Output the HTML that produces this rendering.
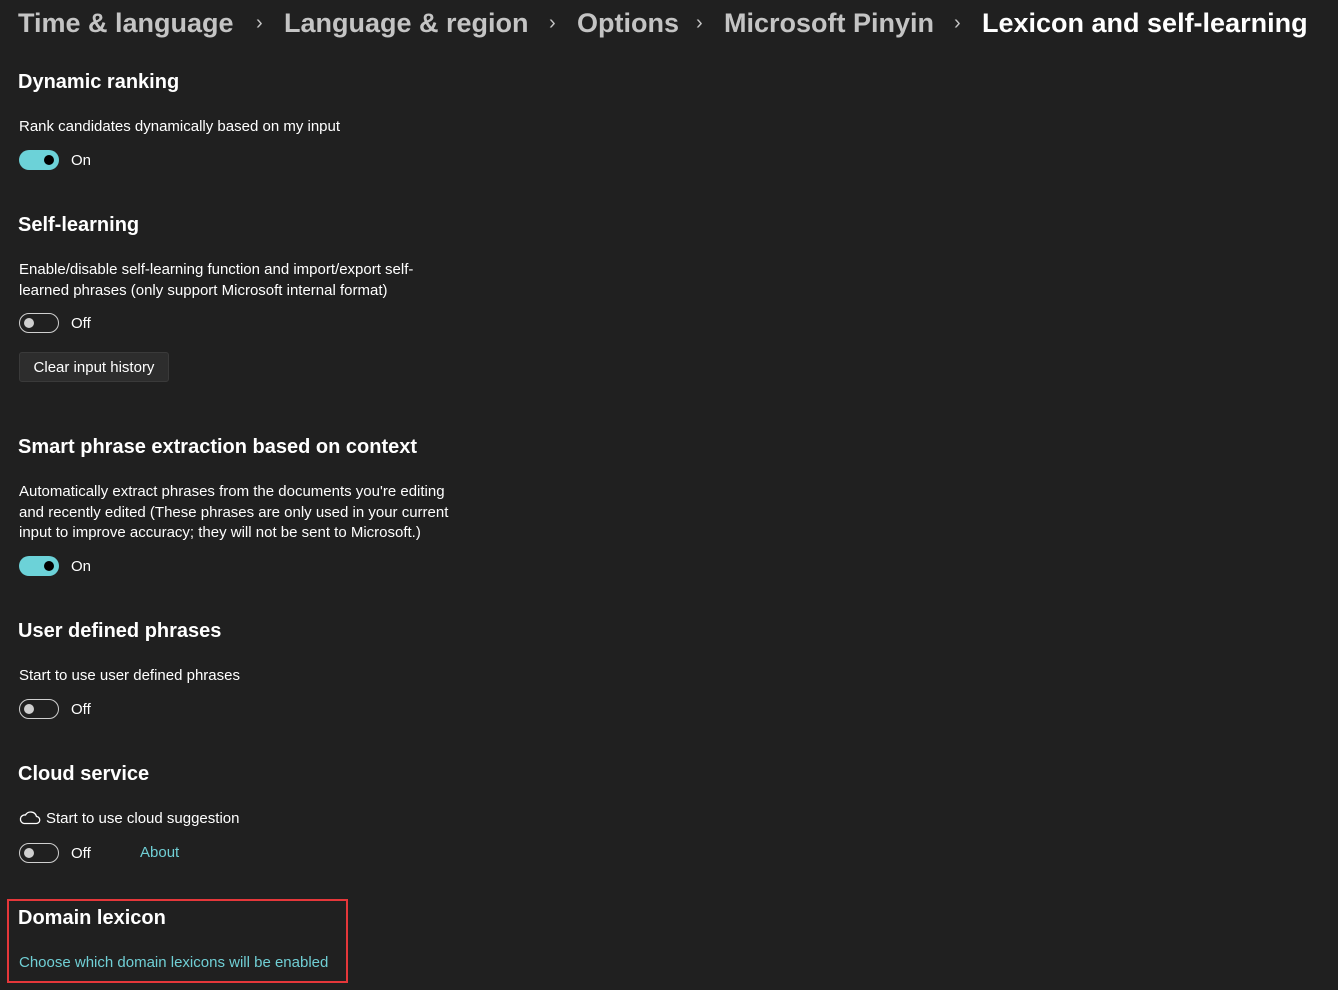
<!DOCTYPE html>
<html><head><style>
body{margin:0;width:1338px;height:990px;background:#202020;font-family:"Liberation Sans",sans-serif;color:#fff;position:relative;overflow:hidden}
.a{position:absolute;white-space:nowrap}
.bc{font-size:27px;font-weight:bold;color:#c4c4c4;top:8px}
.ch{font-size:20px;color:#c4c4c4;top:12px}
.h{font-size:20px;font-weight:bold;left:18px}
.t{font-size:15px;left:19px;line-height:20.5px}
.tg{position:absolute;left:19px;width:40px;height:20px;box-sizing:border-box;border-radius:10px}
.on{background:#6cd2d8}
.on::after{content:"";position:absolute;right:5px;top:5px;width:10px;height:10px;border-radius:50%;background:#000}
.off{border:1px solid #cfcfcf}
.off::after{content:"";position:absolute;left:4px;top:4px;width:10px;height:10px;border-radius:50%;background:#cfcfcf}
.lb{font-size:15px;left:71px}
.ln{color:#70cfd5}
</style></head><body>
<div class="a bc" style="left:18px">Time &amp; language</div>
<div class="a ch" style="left:256px">›</div>
<div class="a bc" style="left:284px">Language &amp; region</div>
<div class="a ch" style="left:549px">›</div>
<div class="a bc" style="left:577px">Options</div>
<div class="a ch" style="left:696px">›</div>
<div class="a bc" style="left:724px">Microsoft Pinyin</div>
<div class="a ch" style="left:954px">›</div>
<div class="a bc" style="left:982px;color:#fff">Lexicon and self-learning</div>

<div class="a h" style="top:71px">Dynamic ranking</div>
<div class="a t" style="top:117px">Rank candidates dynamically based on my input</div>
<div class="tg on" style="top:150px"></div><div class="a lb" style="top:152px">On</div>

<div class="a h" style="top:214px">Self-learning</div>
<div class="a t" style="top:260px">Enable/disable self-learning function and import/export self-<br>learned phrases (only support Microsoft internal format)</div>
<div class="tg off" style="top:313px"></div><div class="a lb" style="top:315px">Off</div>
<div class="a" style="left:19px;top:352px;width:150px;height:30px;box-sizing:border-box;background:#2d2d2d;border:1px solid #3a3a3a;border-radius:3px;font-size:15px;line-height:30px;text-align:center">Clear input history</div>

<div class="a h" style="top:436px">Smart phrase extraction based on context</div>
<div class="a t" style="top:482px">Automatically extract phrases from the documents you're editing<br>and recently edited (These phrases are only used in your current<br>input to improve accuracy; they will not be sent to Microsoft.)</div>
<div class="tg on" style="top:556px"></div><div class="a lb" style="top:558px">On</div>

<div class="a h" style="top:620px">User defined phrases</div>
<div class="a t" style="top:666px">Start to use user defined phrases</div>
<div class="tg off" style="top:699px"></div><div class="a lb" style="top:701px">Off</div>

<div class="a h" style="top:763px">Cloud service</div>
<svg class="a" style="left:19px;top:809px" width="22" height="16" viewBox="0 0 22 16"><path d="M5 14.5h12a3.5 3.5 0 0 0 .5-7A6 6 0 0 0 6.5 6 4.2 4.2 0 0 0 5 14.5z" fill="none" stroke="#fff" stroke-width="1.3"/></svg>
<div class="a t" style="left:46px;top:809px">Start to use cloud suggestion</div>
<div class="tg off" style="top:843px"></div><div class="a lb" style="top:845px">Off</div>
<div class="a ln" style="left:140px;top:844px;font-size:15px">About</div>

<div class="a" style="left:7px;top:899px;width:341px;height:84px;box-sizing:border-box;border:2px solid #e5373a"></div>
<div class="a h" style="top:907px">Domain lexicon</div>
<div class="a t ln" style="top:953px">Choose which domain lexicons will be enabled</div>
</body></html>
